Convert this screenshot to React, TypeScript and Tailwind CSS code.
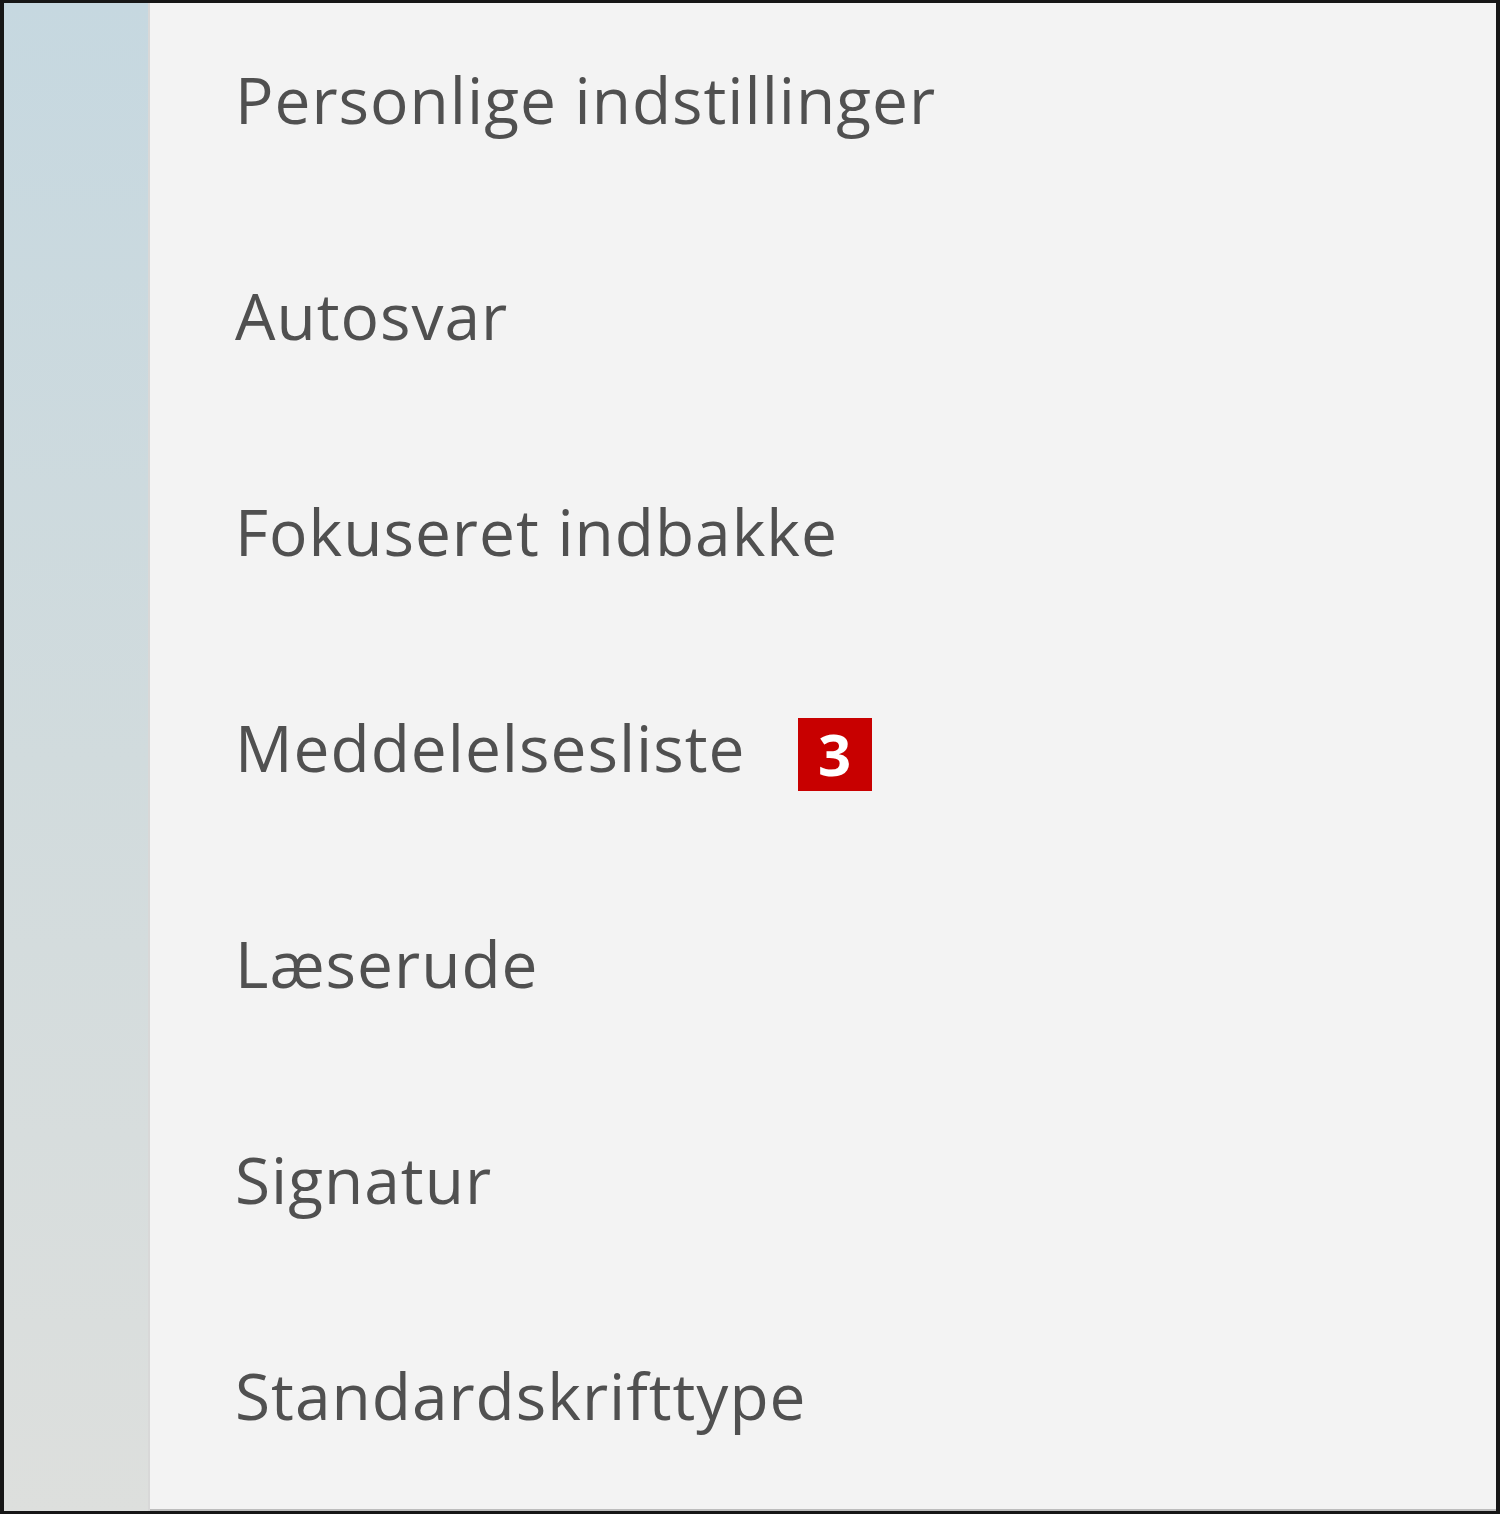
const items: { label: string; badge?: number }[] = [
  { label: "Personlige indstillinger" },
  { label: "Autosvar" },
  { label: "Fokuseret indbakke" },
  { label: "Meddelelsesliste", badge: 3 },
  { label: "Læserude" },
  { label: "Signatur" },
  { label: "Standardskrifttype" },
];

export default function App() {
  return (
    <div className="w-[1500px] h-[1514px] bg-white">
      <div className="flex h-full w-full border-t-[3px] border-l-[4px] border-r-[4px] border-b-[3px] border-[#161616] overflow-hidden">
        {/* left rail */}
        <div className="w-[146px] shrink-0 bg-gradient-to-b from-[#c6d8e0] via-[#d1dbdd] to-[#dddfdd] border-r-2 border-[#d8d8d8]" />

        {/* settings list */}
        <div className="flex-1 bg-[#f3f3f3] border-b-2 border-[#bdbdbd] pl-[85px] pt-[65px]">
          <ul
            className="flex flex-col gap-[152px] text-[64px] leading-[64px] text-[#505050]"
            style={{ fontFamily: '"Open Sans", "Noto Sans", sans-serif' }}
          >
            {items.map((item) => (
              <li key={item.label} className="flex items-center h-[64px] whitespace-nowrap">
                <span className="tracking-[1px]">{item.label}</span>
                {item.badge !== undefined && (
                  <span className="ml-[52px] translate-y-[6px] w-[74px] h-[73px] bg-[#c80000] text-white font-bold text-[58px] leading-none flex items-center justify-center">
                    {item.badge}
                  </span>
                )}
              </li>
            ))}
          </ul>
        </div>
      </div>
    </div>
  );
}
